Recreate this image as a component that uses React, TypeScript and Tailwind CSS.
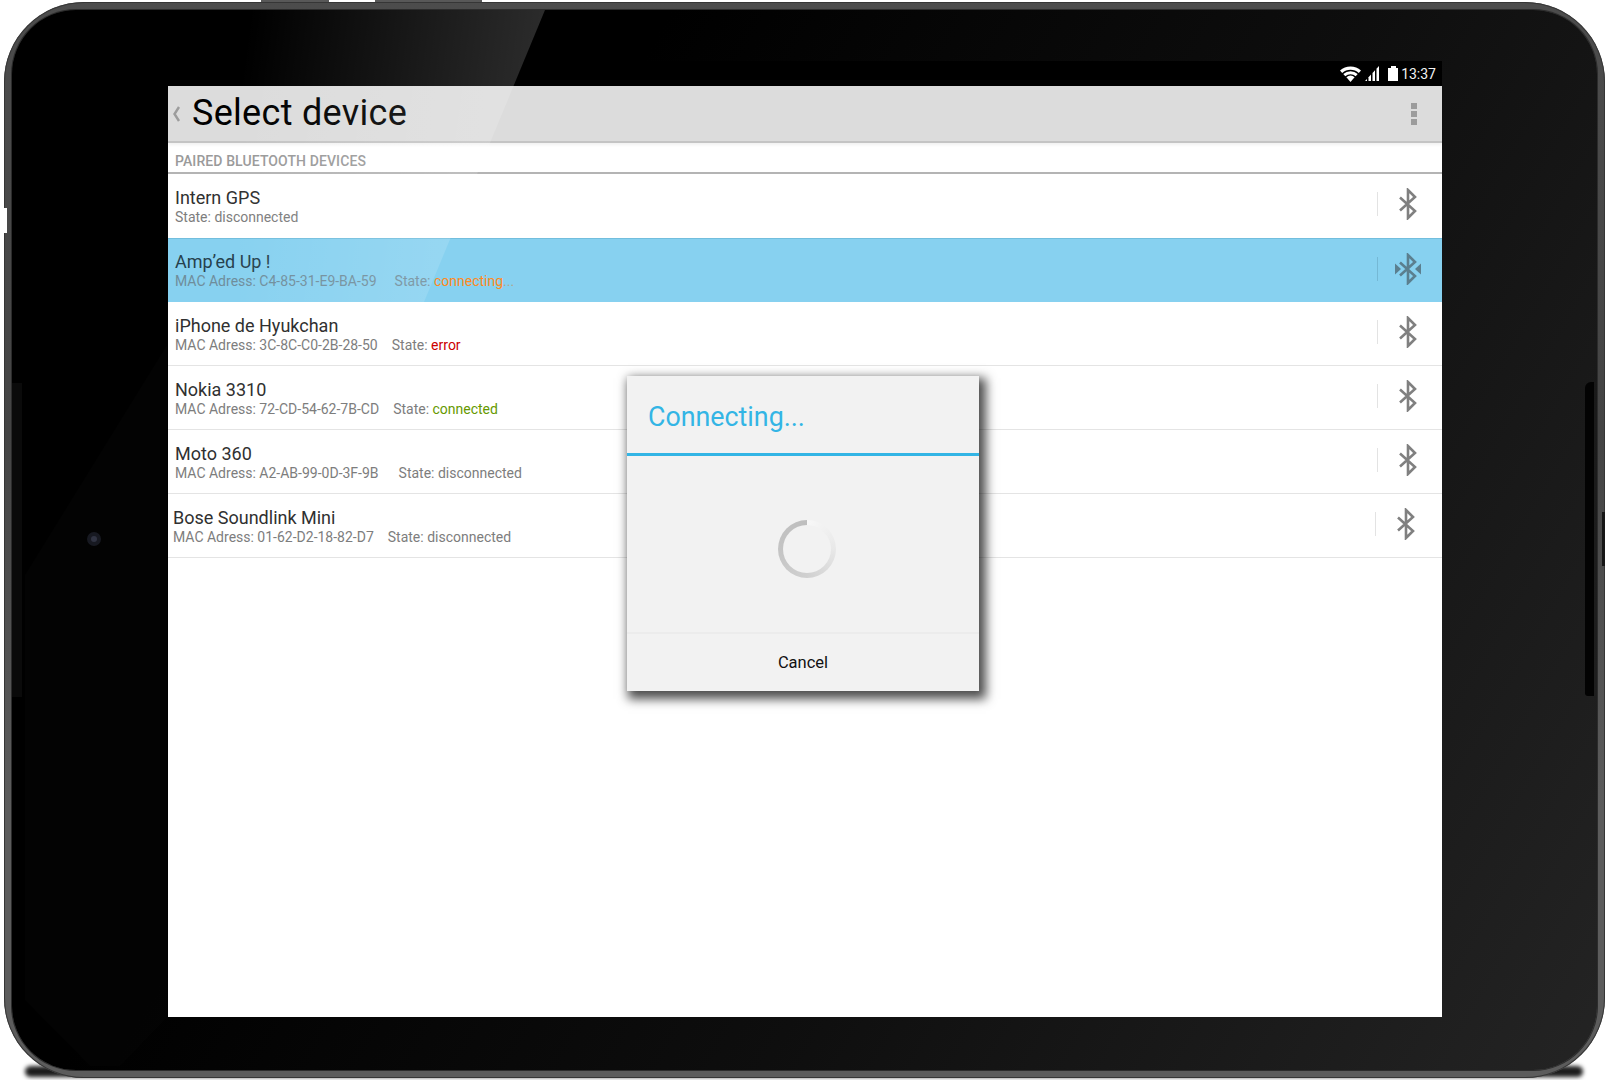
import React from "react";

function Bt({ active = false }: { active?: boolean }) {
  const c = active ? "#5b7f8f" : "#808080";
  return (
    <svg width="30" height="32" viewBox="0 0 30 32" className="block">
      <polyline points="7,9.5 22,23 15,30 15,2 22,9 7,22.5" fill="none" stroke={c} strokeWidth="2.6" strokeLinejoin="miter" />
      {active && <polygon points="2,10.5 8,16 2,21.5" fill={c} />}
      {active && <polygon points="28,10.5 22,16 28,21.5" fill={c} />}
    </svg>
  );
}

type RowProps = {
  name: string;
  mac?: string;
  gap?: string;
  state: React.ReactNode;
  active?: boolean;
  shift?: boolean;
  first?: boolean;
};

function Row({ name, mac, gap, state, active, shift, first }: RowProps) {
  return (
    <div
      className={
        "flex h-[64px] shrink-0 items-start " +
        (active ? "bg-[#87d1f0] border-t border-[#72bedd] " : first ? "bg-white " : "bg-white border-b border-[#e4e4e4] ") +
        (shift ? "pl-[5px] pr-[21px]" : "pl-[7px] pr-[19px]")
      }
    >
      <div className={"min-w-0 flex-1 " + (active ? "pt-[12px]" : "pt-[13px]")}>
        <div className={"text-[18px] leading-[22px] " + (active ? "text-[#26414d]" : "text-[#303030]")}>{name}</div>
        <div className={"flex text-[14px] leading-[17px] " + (active ? "text-[#6f8d9b]" : "text-[#7d7d7d]")}>
          {mac && <span className={gap}>{mac}</span>}
          <span>{state}</span>
        </div>
      </div>
      <div className={"mt-[18px] h-[24px] w-px " + (active ? "bg-[#75b8d5]" : "bg-[#e3e3e3]")} />
      <div className="ml-[15px] mt-[14px] w-[30px]">
        <Bt active={active} />
      </div>
    </div>
  );
}

function Wifi() {
  return (
    <svg width="21" height="16" viewBox="0 0 21 16" className="block">
      <path d="M0 4.6 A15.5 15.5 0 0 1 21 4.6 L18.8 7 A12.5 12.5 0 0 0 2.2 7 Z" fill="#fff" />
      <path d="M3.3 8 A10.5 10.5 0 0 1 17.7 8 L15.7 10.2 A8 8 0 0 0 5.3 10.2 Z" fill="#fff" />
      <path d="M6.4 11.2 A6 6 0 0 1 14.6 11.2 L10.5 16 Z" fill="#fff" />
    </svg>
  );
}

function Signal() {
  return (
    <svg width="14" height="15" viewBox="0 0 14 15" className="block">
      <polygon points="0,15 2,12.9 2,15" fill="#fff" />
      <polygon points="3.5,11.3 6,8.6 6,15 3.5,15" fill="#fff" />
      <polygon points="7.5,7 10,4.3 10,15 7.5,15" fill="#fff" />
      <polygon points="11.5,2.7 14,0 14,15 11.5,15" fill="#fff" />
    </svg>
  );
}

export default function App() {
  return (
    <div className="relative h-[1080px] w-[1611px] overflow-hidden bg-white font-['Roboto',sans-serif]">
      <div className="absolute left-[261px] top-0 h-[4px] w-[68px] bg-[#585858]" />
      <div className="absolute left-[375px] top-0 h-[4px] w-[107px] bg-[#585858]" />
      <div className="absolute left-[25px] top-[1066px] h-[11px] w-[1558px] rounded-full bg-[#1c1c1c] blur-[2px]" />

      {/* Tablet body */}
      <div className="relative ml-[4px] mt-[2px] h-[1076px] w-[1601px] rounded-[80px] bg-[linear-gradient(180deg,#4c4c4c,#444_40%,#5c5c5c_75%,#5c5c5c)] p-[8px] shadow-[inset_0_0_0_1px_#363636]">
        <div className="h-[1060px] rounded-[64px] bg-[linear-gradient(120deg,#000_0%,#000_30%,#0e0e0e_62%,#242424_100%)] pb-[51px] pl-[156px] pr-[155px] pt-[51px] shadow-[0_0_0_1px_#2c2c2c]">
          {/* Screen */}
          <div className="relative flex h-[956px] w-[1274px] flex-col bg-white">
            <div className="flex h-[25px] shrink-0 items-center justify-end bg-black pr-[6px]">
              <Wifi />
              <div className="ml-[4px]">
                <Signal />
              </div>
              <div className="ml-[9px] flex flex-col items-center">
                <div className="h-[2px] w-[5px] bg-white" />
                <div className="h-[13px] w-[10px] bg-white" />
              </div>
              <span className="ml-[3px] pt-[1px] text-[14px] leading-[24px] text-[#f2f2f2]">13:37</span>
            </div>

            <div className="relative flex h-[57px] shrink-0 items-center border-b-2 border-[#c4c4c4] bg-[#dcdcdc] pl-[4px] pr-[25px] shadow-[0_2px_3px_rgba(0,0,0,0.06)]">
              <svg width="9" height="16" viewBox="0 0 9 16" className="block">
                <polyline points="7,1 2.5,8 7,15" fill="none" stroke="#9c9c9c" strokeWidth="2.4" />
              </svg>
              <span className="mb-[2px] ml-[11px] flex-1 text-[36px] leading-[50px] tracking-[0.3px] text-black">Select device</span>
              <div className="flex flex-col gap-[2px]">
                <div className="h-[6px] w-[6px] bg-[#9c9c9c]" />
                <div className="h-[6px] w-[6px] bg-[#9c9c9c]" />
                <div className="h-[6px] w-[6px] bg-[#9c9c9c]" />
              </div>
            </div>

            <div className="flex h-[31px] shrink-0 items-end border-b-2 border-[#b4b4b4] pb-[1px] pl-[7px] text-[14px] font-medium leading-[20px] tracking-[0.1px] text-[#9a9a9a]">
              PAIRED BLUETOOTH DEVICES
            </div>

            <Row first name="Intern GPS" state="State: disconnected" />
            <Row
              active
              name="Amp’ed Up !"
              mac="MAC Adress: C4-85-31-E9-BA-59"
              gap="mr-[18px]"
              state={
                <>
                  State: <span className="text-[#ff8a1c]">connecting</span>
                  <span className="text-[#b0a48c]">...</span>
                </>
              }
            />
            <Row
              name="iPhone de Hyukchan"
              mac="MAC Adress: 3C-8C-C0-2B-28-50"
              gap="mr-[14px]"
              state={
                <>
                  State: <span className="text-[#cc0000]">error</span>
                </>
              }
            />
            <Row
              name="Nokia 3310"
              mac="MAC Adress: 72-CD-54-62-7B-CD"
              gap="mr-[14px]"
              state={
                <>
                  State: <span className="text-[#669900]">connected</span>
                </>
              }
            />
            <Row name="Moto 360" mac="MAC Adress: A2-AB-99-0D-3F-9B" gap="mr-[20px]" state="State: disconnected" />
            <Row shift name="Bose Soundlink Mini" mac="MAC Adress: 01-62-D2-18-82-D7" gap="mr-[14px]" state="State: disconnected" />

            {/* Dialog */}
            <div className="absolute left-[459px] top-[315px] z-10 flex h-[315px] w-[352px] flex-col bg-[#f2f2f2] shadow-[4px_5px_10px_3px_rgba(0,0,0,0.7)]">
              <div className="flex h-[80px] shrink-0 items-center border-b-[3px] border-[#33b5e5] pl-[21px] pt-[5px] text-[26.8px] leading-[36px] text-[#33b5e5]">
                Connecting...
              </div>
              <div className="flex flex-1 justify-center pl-[7px] pt-[64px]">
                <div className="flex h-[58px] w-[58px] items-center justify-center rounded-full bg-[conic-gradient(#f8f8f8_0deg,#e8e8e8_90deg,#d0d0d0_180deg,#c4c4c4_270deg,#bebebe_360deg)]">
                  <div className="h-[48px] w-[48px] rounded-full bg-[#f2f2f2]" />
                </div>
              </div>
              <div className="flex h-[59px] shrink-0 items-center justify-center border-t-2 border-[#ececec] text-[16.5px] leading-[20px] text-[#111]">
                Cancel
              </div>
            </div>
          </div>
        </div>

        {/* Side details of the body */}
        <div className="absolute left-0 top-[206px] h-[25px] w-[3px] bg-white" />
        <div className="absolute left-[1598px] top-[510px] h-[54px] w-[3px] bg-[#161616]" />
        <div className="absolute left-[1581px] top-[380px] h-[314px] w-[9px] rounded-bl-[3px] rounded-tl-[6px] bg-[#030303]" />
        <div className="absolute left-[8px] top-[381px] h-[314px] w-[10px] bg-[#0a0a0a]" />
        <div className="absolute left-[83px] top-[530px] flex h-[14px] w-[14px] items-center justify-center rounded-full bg-[#15171f]">
          <div className="h-[6px] w-[6px] rounded-full bg-[#2e3140]" />
        </div>
      </div>

      {/* Glass reflection */}
      <svg width="1611" height="1080" viewBox="0 0 1611 1080" className="pointer-events-none absolute left-0 top-0">
        <defs>
          <linearGradient id="gloss" gradientUnits="userSpaceOnUse" x1="240" y1="80" x2="530" y2="120">
            <stop offset="0" stopColor="#fff" stopOpacity="0" />
            <stop offset="1" stopColor="#fff" stopOpacity="0.17" />
          </linearGradient>
        </defs>
        <polygon points="240,10 545,10 424,302 240,302" fill="url(#gloss)" />
        <polygon points="167,345 25,575 25,1000 90,1066 120,1066 167,1017" fill="#fff" fillOpacity="0.012" />
      </svg>
    </div>
  );
}
